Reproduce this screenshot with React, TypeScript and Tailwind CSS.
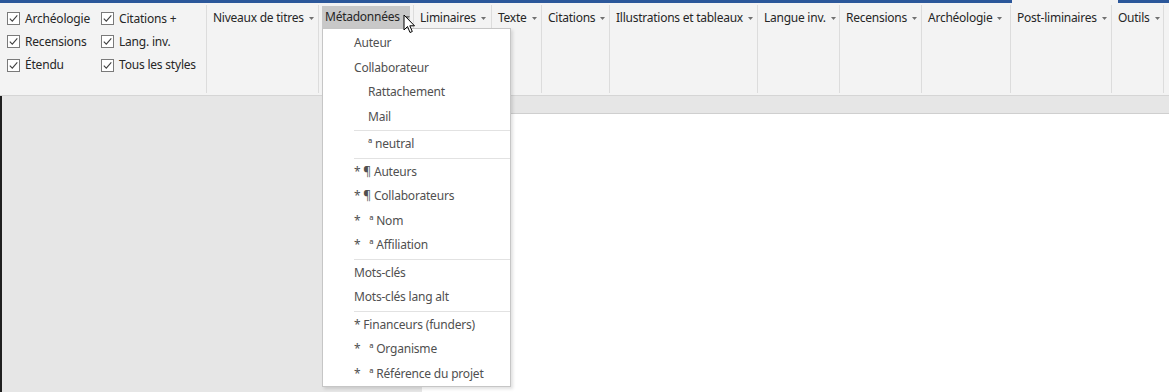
import React from "react";

const font = { fontFamily: '"Segoe UI", "Noto Sans", "Open Sans", sans-serif' };

function Arrow() {
  return (
    <svg width="5" height="3" viewBox="0 0 5 3" className="ml-[5px] mt-[1px]">
      <path d="M0 0 H5 L2.5 3 Z" fill="#707070" />
    </svg>
  );
}

function Check({ label }: { label: string }) {
  return (
    <div className="flex items-center h-[23.3px]">
      <div className="w-[13px] h-[13px] border border-[#7a7a7a] bg-white flex items-center justify-center">
        <svg width="11" height="11" viewBox="0 0 11 11">
          <path d="M1.8 5.6 L4.3 8.2 L9.3 2.4" fill="none" stroke="#404040" strokeWidth="1.1" />
        </svg>
      </div>
      <span className="ml-[5px] text-[12px] tracking-[-0.2px] text-[#262626]">{label}</span>
    </div>
  );
}

function Group({ w, label, pl = "pl-[6px]" }: { w: string; label: string; pl?: string }) {
  return (
    <div className={`${w} ${pl} border-l border-[#dcdcdc] my-[2px] pt-[4px]`}>
      <div className="flex items-center h-[18px] text-[12px] tracking-[-0.25px] text-[#262626] whitespace-nowrap">
        {label}
        <Arrow />
      </div>
    </div>
  );
}

type Item = { t: string; indent?: boolean } | "sep";

const items: Item[] = [
  { t: "Auteur" },
  { t: "Collaborateur" },
  { t: "Rattachement", indent: true },
  { t: "Mail", indent: true },
  "sep",
  { t: "ª neutral", indent: true },
  "sep",
  { t: "* ¶ Auteurs" },
  { t: "* ¶ Collaborateurs" },
  { t: "*   ª Nom" },
  { t: "*   ª Affiliation" },
  "sep",
  { t: "Mots-clés" },
  { t: "Mots-clés lang alt" },
  "sep",
  { t: "* Financeurs (funders)" },
  { t: "*   ª Organisme" },
  { t: "*   ª Référence du projet" },
];

export default function App() {
  return (
    <div className="relative w-[1169px] h-[392px] overflow-hidden bg-[#e6e6e6] flex flex-col" style={font}>
      {/* top colour bar */}
      <div className="flex h-[3px] shrink-0">
        <div className="w-[1012px] bg-[#2b579a]" />
        <div className="w-[106px] bg-[#f3f3f3]" />
        <div className="flex-1 bg-[#2b579a]" />
      </div>

      {/* ribbon */}
      <div className="h-[93px] shrink-0 bg-[#f3f3f3] border-b border-[#d5d5d5] flex">
        <div className="w-[206px] flex pt-[4px] pl-[7px]">
          <div className="w-[94px]">
            <Check label="Archéologie" />
            <Check label="Recensions" />
            <Check label="Étendu" />
          </div>
          <div>
            <Check label="Citations +" />
            <Check label="Lang. inv." />
            <Check label="Tous les styles" />
          </div>
        </div>
        <Group w="w-[112px]" label="Niveaux de titres" />
        <div className="w-[95px] pl-[3px] border-l border-[#dcdcdc] my-[2px] pt-[1px]">
          <div className="w-[88px] h-[22px] bg-[#c8c8c8] flex items-center pl-[3px] pb-[1px] text-[12px] tracking-[-0.25px] text-[#262626] whitespace-nowrap">
            Métadonnées
            <Arrow />
          </div>
        </div>
        <Group w="w-[78px]" label="Liminaires" />
        <Group w="w-[50px]" label="Texte" />
        <Group w="w-[68px]" label="Citations" />
        <Group w="w-[148px]" label="Illustrations et tableaux" />
        <Group w="w-[82px]" label="Langue inv." />
        <Group w="w-[82px]" label="Recensions" />
        <Group w="w-[89px]" label="Archéologie" />
        <Group w="w-[101px]" label="Post-liminaires" />
        <Group w="w-[52px]" label="Outils" />
        <div className="flex-1 border-l border-[#dcdcdc] my-[2px]" />
      </div>

      {/* workspace */}
      <div className="flex-1 flex">
        <div className="w-[2px] bg-[#1f1f1f]" />
        <div className="w-[420px]" />
        <div className="flex-1 mt-[17px] bg-white border-t border-[#cfcfcf]" />
      </div>

      {/* dropdown menu */}
      <div className="absolute left-[322px] top-[28px] w-[189px] bg-white border border-[#c6c6c6] shadow-[2px_2px_3px_rgba(0,0,0,0.12)] pt-[2px]">
        {items.map((it, i) =>
          it === "sep" ? (
            <div key={i} className="h-[3px] flex items-center pl-[31px]">
              <div className="h-px w-full bg-[#e2e2e2]" />
            </div>
          ) : (
            <div
              key={i}
              className={`h-[24.5px] flex items-center text-[12px] tracking-[-0.2px] text-[#505050] whitespace-pre ${it.indent ? "pl-[45px]" : "pl-[31px]"}`}
            >
              {it.t}
            </div>
          )
        )}
      </div>

      {/* mouse cursor */}
      <svg className="absolute left-[403px] top-[14px]" width="13" height="20" viewBox="0 0 13 20">
        <path d="M1 1 L1 16 L4.5 12.5 L7 18.5 L9.3 17.5 L6.8 11.8 L11.5 11.8 Z" fill="white" stroke="black" strokeWidth="1" strokeLinejoin="round" />
      </svg>
    </div>
  );
}
